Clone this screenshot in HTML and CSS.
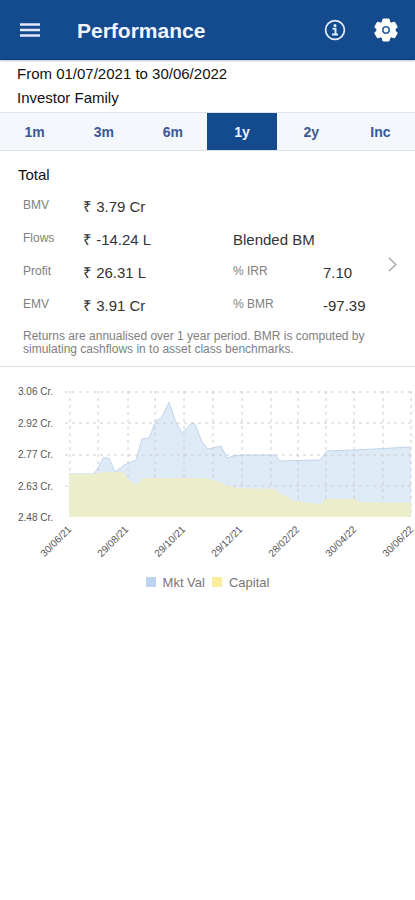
FILE: index.html
```html
<!DOCTYPE html>
<html lang="en">
<head>
<meta charset="utf-8">
<meta name="viewport" content="width=device-width, initial-scale=1">
<title>Performance</title>
<link rel="stylesheet" href="styles.css">
</head>
<body>
<header class="topbar">
  <button class="icon-button" type="button" aria-label="Menu">
    <svg width="20" height="16" viewBox="0 0 20 16"><path d="M0 2.500h20M0 8h20M0 13.500h20" stroke="#e3e8fb" stroke-width="2.600"/></svg>
  </button>
  <h1 class="title">Performance</h1>
  <button class="icon-button" type="button" aria-label="Information">
    <svg width="22" height="22" viewBox="0 0 22 22"><circle cx="11" cy="11" r="9.400" fill="none" stroke="#e8eefa" stroke-width="1.700"/><circle cx="11" cy="6.600" r="1.500" fill="#e8eefa"/><path d="M8.500 9.700h3v5.500M8 15.500h6" fill="none" stroke="#e8eefa" stroke-width="1.900"/></svg>
  </button>
  <button class="icon-button" type="button" aria-label="Settings">
    <svg width="24" height="24" viewBox="0 0 24 24"><path d="M9 1h6l.8 3.200 1.500.9 3.200-1L23.300 9l-2.100 2.200v1.600l2.100 2.200-2.800 4.900-3.200-1-1.500.9L15 23H9l-.8-3.200-1.500-.9-3.200 1L.7 15l2.100-2.200v-1.600L.7 9l2.800-4.900 3.200 1 1.500-.9z" fill="#fff" stroke="#fff" stroke-linejoin="round"/><circle cx="12" cy="12" r="3.200" fill="#fff" stroke="#2d609f" stroke-width="1.600"/></svg>
  </button>
</header>
<main>
  <section class="scope">
    <p>From 01/07/2021 to 30/06/2022</p>
    <p>Investor Family</p>
  </section>
  <nav class="periods" aria-label="Period">
    <button type="button">1m</button>
    <button type="button">3m</button>
    <button type="button">6m</button>
    <button type="button" class="active" aria-pressed="true">1y</button>
    <button type="button">2y</button>
    <button type="button">Inc</button>
  </nav>
  <section class="summary">
    <h2>Total</h2>
    <div class="figures">
      <span class="label">BMV</span><span class="value wide">₹ 3.79 Cr</span>
      <span class="label">Flows</span><span class="value">₹ -14.24 L</span><span class="value benchmark">Blended BM</span>
      <span class="label">Profit</span><span class="value">₹ 26.31 L</span><span class="label">% IRR</span><span class="value">7.10</span>
      <button class="more" type="button" aria-label="Show details"><svg width="9" height="15" viewBox="0 0 9 15"><path d="M1 1l7 6.500L1 14" fill="none" stroke="#aaa" stroke-width="1.500"/></svg></button>
      <span class="label">EMV</span><span class="value">₹ 3.91 Cr</span><span class="label">% BMR</span><span class="value">-97.39</span>
    </div>
    <p class="note">Returns are annualised over 1 year period. BMR is computed by simulating cashflows in to asset class benchmarks.</p>
  </section>
  <section class="chart">
    <svg viewBox="0 367 415 199" role="img" aria-label="Market value and capital">
      <path class="market" d="M69 474H93L97 470L103 458H109L115 472L119 469L124 465L129 463L136 460L142 439L149 438L156 421L162 417L169 402L175 420L182 433L187 428L192 423L195 424L202 442L208 449L221 446L227 458L233 456L242 455H275L280 461L320 460L327 451L355 450L411 447V517H69Z"/>
      <path class="market-line" d="M69 474H93L97 470L103 458H109L115 472L119 469L124 465L129 463L136 460L142 439L149 438L156 421L162 417L169 402L175 420L182 433L187 428L192 423L195 424L202 442L208 449L221 446L227 458L233 456L242 455H275L280 461L320 460L327 451L355 450L411 447"/>
      <path class="grid" d="M65 392H412M65 423H412M65 455H412M65 486H412M70 391V516M98 391V516M128 391V516M155 391V516M184 391V516M213 391V516M242 391V516M271 391V516M298 391V516M326 391V516M354 391V516M383 391V516M411 391V516"/>
      <path class="capital" d="M69 474H93L105 472H123L129 480L136 485L143 478H205L220 482L228 486L238 488L275 489L281 494L288 497L294 501L320 504L326 499H355L360 502L411 503V517H69Z"/>
      <g class="axis">
        <text x="18" y="395">3.06 Cr.</text>
        <text x="18" y="427">2.92 Cr.</text>
        <text x="18" y="458">2.77 Cr.</text>
        <text x="18" y="490">2.63 Cr.</text>
        <text x="18" y="521">2.48 Cr.</text>
      </g>
      <g class="axis dates">
        <text transform="translate(72 530) rotate(-45)">30/06/21</text>
        <text transform="translate(129 530) rotate(-45)">29/08/21</text>
        <text transform="translate(186 530) rotate(-45)">29/10/21</text>
        <text transform="translate(243 530) rotate(-45)">29/12/21</text>
        <text transform="translate(300 530) rotate(-45)">28/02/22</text>
        <text transform="translate(357 530) rotate(-45)">30/04/22</text>
        <text transform="translate(414 530) rotate(-45)">30/06/22</text>
      </g>
    </svg>
    <div class="legend">
      <span class="swatch blue"></span><span>Mkt Val</span>
      <span class="swatch yellow"></span><span>Capital</span>
    </div>
  </section>
</main>
</body>
</html>
```
FILE: styles.css
```css
* { box-sizing: border-box; }
body {
  margin: 0;
  background: #fff;
  color: #222;
  font-family: "Liberation Sans", Arial, sans-serif;
  font-size: 15px;
}
h1, h2, p { margin: 0; }
button {
  margin: 0;
  padding: 0;
  border: 0;
  background: none;
  font: inherit;
  cursor: pointer;
}
svg { display: block; }

.topbar {
  display: flex;
  align-items: center;
  height: 60px;
  padding: 0 17px 0 20px;
  background: #134b8e;
  border-bottom: 1px solid #0d3d7c;
  box-shadow: 0 1px 2px #b9c2cf;
}
.title {
  flex: 1;
  margin-left: 37px;
  padding-top: 3px;
  color: #f1f5fe;
  font-size: 21px;
  line-height: 24px;
}
.icon-button + .icon-button { margin-left: 28px; }

.scope {
  padding: 2px 17px;
  color: #111;
  line-height: 24px;
}

.periods {
  display: grid;
  grid-template-columns: repeat(6, 1fr);
  height: 39px;
  background: #f4f7fb;
  border-top: 1px solid #dfe3e8;
  border-bottom: 1px solid #dfe3e8;
}
.periods button { color: #3b5798; font-weight: bold; font-size: 14px; }
.periods .active { background: #134b8e; color: #f1f5fe; }

.summary {
  padding: 12px 18px 10px;
  border-bottom: 1px solid #ddd;
}
.summary h2 { font-size: 15px; font-weight: normal; line-height: 24px; color: #111; }
.figures {
  display: grid;
  grid-template-columns: 60fr 150fr 90fr 65fr 9fr;
  grid-auto-rows: 33px;
  align-items: start;
  margin: 4px 0 0 5px;
}
.label { padding-top: 4px; color: #808080; font-size: 12px; line-height: 20px; }
.value { padding-top: 6px; color: #333; line-height: 20px; white-space: nowrap; }
.wide { grid-column: 2 / 6; }
.benchmark { grid-column: 3 / 6; }
.note { margin: 7px 10px 0 5px; color: #808080; font-size: 12px; line-height: 13px; }

.chart svg { width: 100%; height: auto; }
.more svg { width: 9px; }
.market { fill: #dfeaf7; }
.market-line { fill: none; stroke: #c0d5ec; }
.capital { fill: #ecedca; }
.grid { fill: none; stroke: #c9ccd0; stroke-dasharray: 3 4; }
.axis { fill: #555; font-size: 10px; }
.dates { text-anchor: end; }
.legend {
  display: flex;
  align-items: center;
  justify-content: center;
  gap: 7px;
  height: 32px;
  color: #777;
  font-size: 13px;
}
.swatch { width: 10px; height: 10px; }
.blue { background: #bdd4f0; }
.yellow { background: #faee9e; }
```
